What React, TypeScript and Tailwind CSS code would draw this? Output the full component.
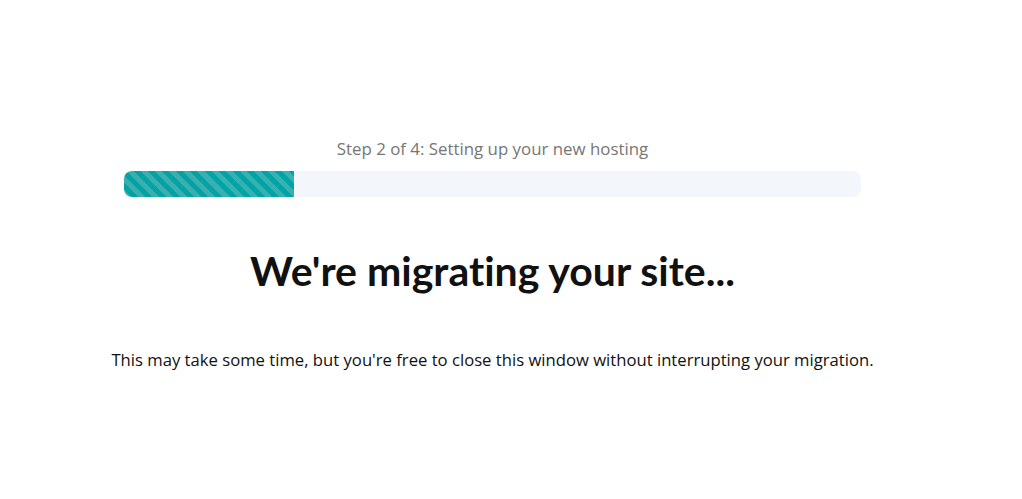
export default function App() {
  return (
    <div className="w-[1022px] h-[499px] bg-white" style={{ fontFamily: '"Open Sans", "Noto Sans", sans-serif' }}>
      <div className="w-[985px] flex flex-col items-center pt-[137px]">
        <div className="text-[16.85px] leading-[24px] text-[#767676]">Step 2 of 4: Setting up your new hosting</div>
        <div className="mt-[10px] w-[737px] h-[26px] rounded-[8px] bg-[#f3f7fb] overflow-hidden flex">
          <div className="w-[170px] h-full bg-[repeating-linear-gradient(45deg,#3aafb0_0px,#3aafb0_5px,#00a4a6_5px,#00a4a6_10px)]" />
        </div>
        <h1 className="mt-[48px] text-[41px] leading-[52px] font-bold text-[#111111] [font-variant-ligatures:none]" style={{ fontFamily: 'Lato, sans-serif' }}>We're migrating your site...</h1>
        <p className="mt-[51px] text-[16.67px] leading-[24px] text-[#111111]">This may take some time, but you're free to close this window without interrupting your migration.</p>
      </div>
    </div>
  );
}
